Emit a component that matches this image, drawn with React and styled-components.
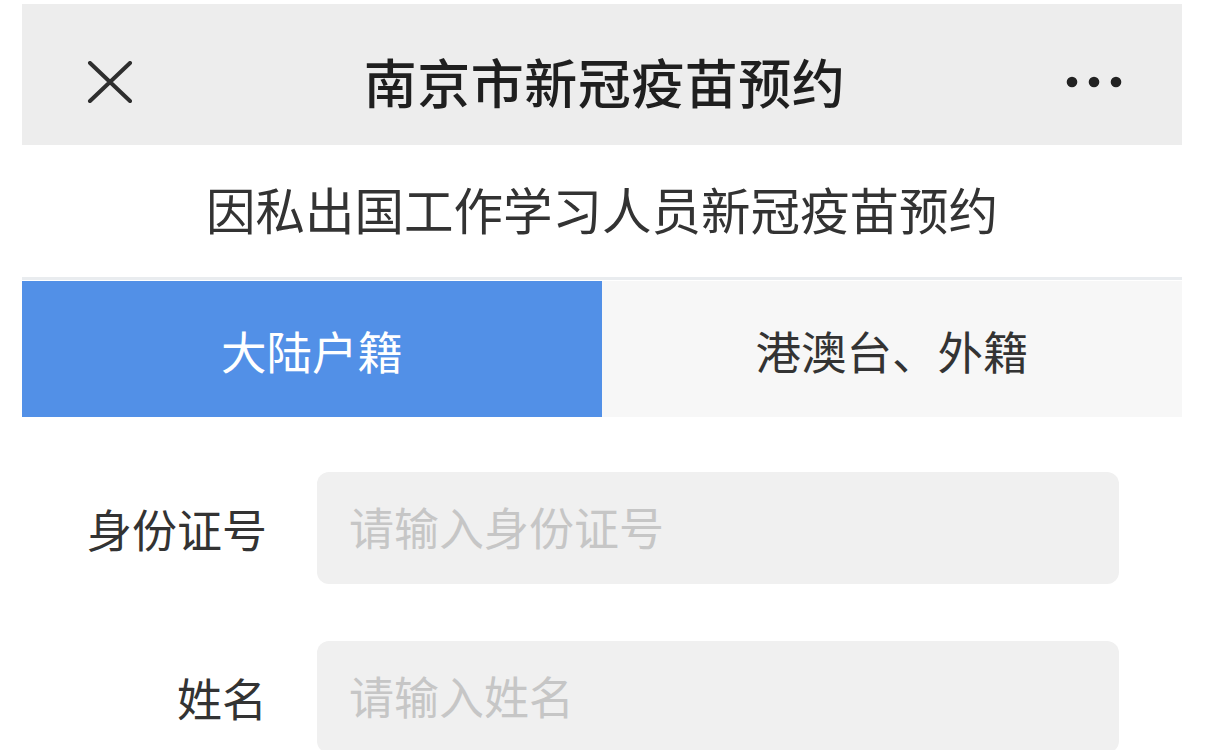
import React from "react";
import styled, { createGlobalStyle } from "styled-components";

const Global = createGlobalStyle`
  html, body { margin: 0; padding: 0; background: #ffffff; }
  body { font-family: "Noto Sans CJK SC", "Noto Sans", sans-serif; color: #333; }
  * { box-sizing: border-box; }
`;

const Page = styled.div`
  width: 1206px;
  height: 750px;
  overflow: hidden;
  padding: 4px 24px 0 22px;
`;

const Panel = styled.div`
  width: 1160px;
  display: flex;
  flex-direction: column;
`;

const NavBar = styled.header`
  height: 141px;
  background: #ededed;
  display: grid;
  grid-template-columns: 1fr auto 1fr;
  align-items: center;
  padding: 14px 60px 0 65px;
`;

const NavTitle = styled.h1`
  margin: 0;
  font-size: 53px;
  font-weight: 500;
  color: #1f1f1f;
  letter-spacing: 0.5px;
  line-height: 1;
`;

const IconButton = styled.button`
  border: 0;
  background: transparent;
  padding: 0;
  display: flex;
  align-items: center;
  justify-self: ${(p) => (p.$end ? "end" : "start")};
  cursor: pointer;
`;

const SubTitle = styled.div`
  height: 135px;
  display: flex;
  align-items: center;
  justify-content: center;
  font-size: 49.5px;
  color: #333;
  padding-bottom: 6px;
  border-bottom: 3px solid #e9ecef;
`;

const Tabs = styled.div`
  display: grid;
  grid-template-columns: 580px 1fr;
  height: 136px;
  margin-top: 1px;
`;

const Tab = styled.div`
  display: flex;
  align-items: center;
  justify-content: center;
  font-size: 45.5px;
  background: ${(p) => (p.$active ? "#5290e7" : "#f7f7f7")};
  color: ${(p) => (p.$active ? "#ffffff" : "#333")};
  padding-top: 1px;
`;

const Form = styled.div`
  display: flex;
  flex-direction: column;
  gap: 57px;
  padding-top: 55px;
`;

const Row = styled.div`
  display: grid;
  grid-template-columns: 245px 802px;
  column-gap: 50px;
  align-items: center;
`;

const Label = styled.label`
  text-align: right;
  font-size: 45px;
  color: #333;
`;

const Input = styled.input`
  height: 112px;
  border: 0;
  outline: none;
  border-radius: 12px;
  background: #f0f0f0;
  padding: 0 0 4px 32px;
  font-family: inherit;
  font-size: 45px;
  color: #333;
  &::placeholder { color: #c6c6c6; }
`;

const CloseIcon = () => (
  <svg width="46" height="42" viewBox="0 0 46 42">
    <path d="M3 2 L43 40 M43 2 L3 40" stroke="#2e2e2e" strokeWidth="4" strokeLinecap="round" fill="none" />
  </svg>
);

const MoreIcon = () => (
  <svg width="56" height="12" viewBox="0 0 56 12">
    <circle cx="6" cy="6" r="5.3" fill="#222" />
    <circle cx="28" cy="6" r="5.3" fill="#222" />
    <circle cx="50" cy="6" r="5.3" fill="#222" />
  </svg>
);

export default function App() {
  return (
    <>
      <Global />
      <Page>
        <Panel>
          <NavBar>
            <IconButton aria-label="关闭"><CloseIcon /></IconButton>
            <NavTitle>南京市新冠疫苗预约</NavTitle>
            <IconButton $end aria-label="更多"><MoreIcon /></IconButton>
          </NavBar>
          <SubTitle>因私出国工作学习人员新冠疫苗预约</SubTitle>
          <Tabs>
            <Tab $active>大陆户籍</Tab>
            <Tab>港澳台、外籍</Tab>
          </Tabs>
          <Form>
            <Row>
              <Label>身份证号</Label>
              <Input placeholder="请输入身份证号" />
            </Row>
            <Row>
              <Label>姓名</Label>
              <Input placeholder="请输入姓名" />
            </Row>
          </Form>
        </Panel>
      </Page>
    </>
  );
}
